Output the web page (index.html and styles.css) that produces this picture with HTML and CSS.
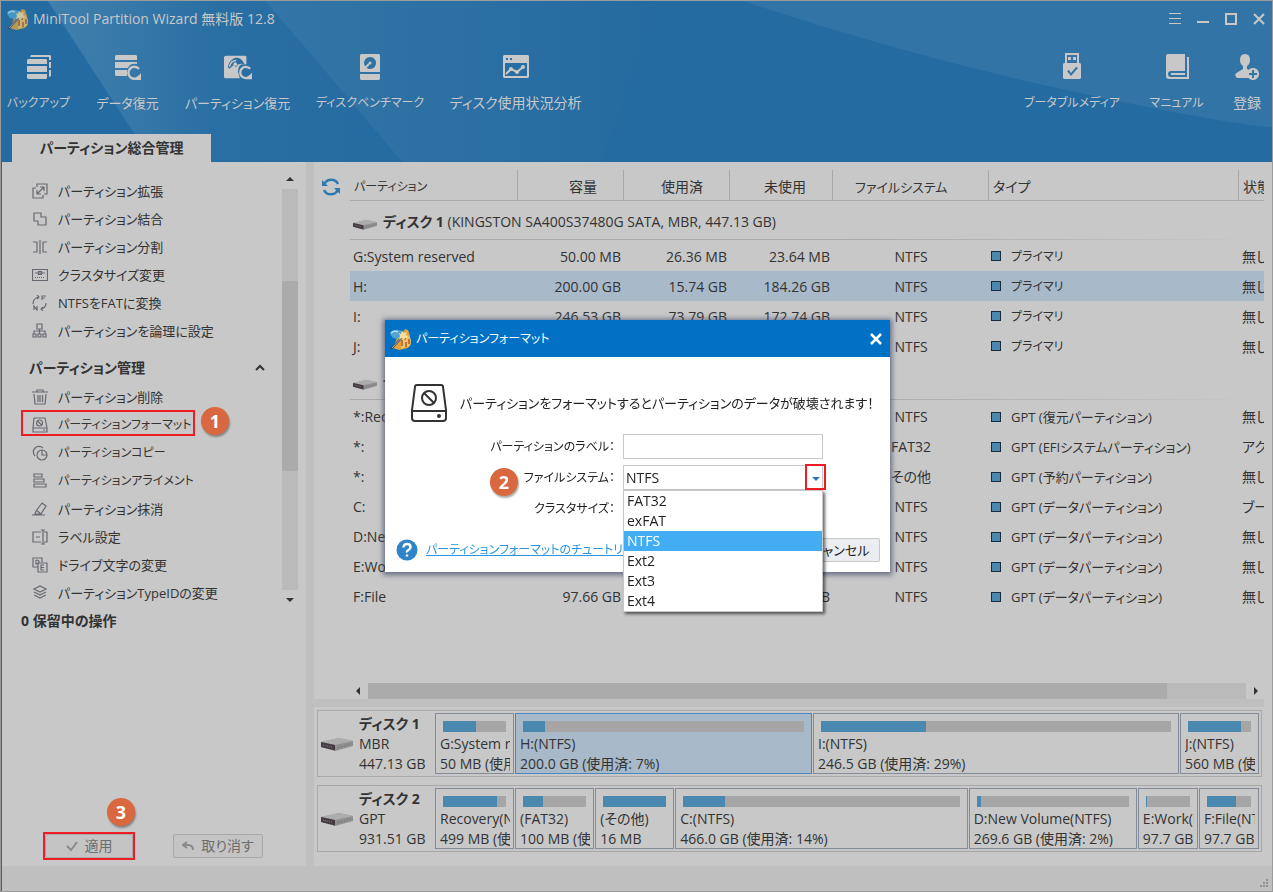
FILE: index.html
```html
<!DOCTYPE html>
<html lang="ja">
<head>
<meta charset="utf-8">
<title>MiniTool Partition Wizard</title>
<link rel="stylesheet" href="styles.css">
</head>
<body>
<svg class="defs" aria-hidden="true">
  <symbol id="app" viewBox="0 0 24 24">
    <path d="M8 11 14 5l2-3 3 1 2 6 1 8-3 4-9 2-6-2z" fill="#e0a23c"/>
    <path d="M12 12 19 8l3 5-1 6-9 3z" fill="#f0c465"/>
    <path d="M1 7Q3 2 9 3l5 1-1 5-5 3-4-1z" fill="#4fa3d1"/>
    <path d="M2 6Q5 3 9 5" fill="none" stroke="#b9dcee" stroke-width="1.5"/>
    <path d="M16 8v5m-3 0v6m4-4v5m3-8v5" stroke="#a8482a" stroke-width="1.3"/>
    <path d="M2 22 15 8" stroke="#3e4656" stroke-width="2"/><path d="M3 21 14 9" stroke="#d5d9df" stroke-width=".7"/>
    <path d="m13 4 2 2 3-1-1 3 2 2-3 1-1 2-2-2-3 1 1-3-1-3 2 1z" fill="#f8dda0"/>
  </symbol>
  <symbol id="disk" viewBox="0 0 32 14">
    <path d="M0 5 18 1l14 3v5L14 14 0 10z" fill="#8f8f8f"/>
    <path d="M0 5 18 1l14 3-18 4z" fill="#adadad"/>
    <path d="M0 5l14 3v5.500L0 10z" fill="#443b42"/>
    <path d="m2 8 9 2" stroke="#7d6673" stroke-width="1.500" stroke-dasharray="1 1"/>
    <path d="m17 10.500 14-4" stroke="#6a6a6a" stroke-dasharray="1 2"/>
  </symbol>
</svg>

<div class="window">
  <header class="top">
    <svg class="rays" viewBox="0 0 1273 162" preserveAspectRatio="none" aria-hidden="true">
      <defs>
        <linearGradient id="g1" x1="0" x2="1"><stop offset="0" stop-color="#4180ad"/><stop offset=".45" stop-color="#2a6fa3"/><stop offset="1" stop-color="#246ba1"/></linearGradient>
        <linearGradient id="g2" x1="0" x2="1"><stop offset="0" stop-color="#3375a6"/><stop offset="1" stop-color="#246ba1"/></linearGradient>
      </defs>
      <path d="M47 0H420V162H152z" fill="url(#g1)"/>
      <path d="M265 0H660L600 162H402z" fill="url(#g2)"/>
      <path d="M743 0Q900 53 1060 88T1273 127V0z" fill="#3374a6"/>
    </svg>
    <div class="titlebar">
      <svg class="logo" aria-hidden="true"><use href="#app"/></svg>
      <h1 class="title">MiniTool Partition Wizard 無料版 12.8</h1>
      <div class="controls">
        <button aria-label="メニュー"><svg viewBox="0 0 12 12"><path d="M0 .5h12M0 5.500h12M0 10.500h12" stroke-width="1"/></svg></button>
        <button aria-label="最小化"><svg viewBox="0 0 12 12"><path d="M0 9h12"/></svg></button>
        <button aria-label="最大化"><svg viewBox="0 0 12 12"><path d="M1 1h10v10H1z"/></svg></button>
        <button aria-label="閉じる"><svg viewBox="0 0 12 12"><path d="m1 1 10 10M11 1 1 11"/></svg></button>
      </div>
    </div>
    <nav class="toolbar">
      <div class="tools tools-left">
        <button class="kana"><svg viewBox="0 0 28 28"><path d="M6 2h19l1 1v4h-2V4H5zM24 9h2v6h-2zM24 17h2v6l-2 1z"/><path d="M3 6h18l1 1v4H2V7zM2 13h20v6H2zM2 21h20v4l-1 1H3l-1-1z"/></svg>バックアップ</button>
        <button><svg viewBox="0 0 28 28"><path d="M2 2h20l1 1v4H1V3zM1 9h22v2q-7-1-9 4H1zM1 17h12v6H2l-1-1z"/><path d="M25 16a6 6 0 1 0 .5 7" fill="none" stroke="#c8c8c8" stroke-width="2.500"/><path d="M27 20v7h-6z"/></svg>データ復元</button>
        <button><svg viewBox="0 0 30 28"><path fill-rule="evenodd" d="M2 2h21l1 1v8q-9-2-9 8l2 7H1l-1-1V3zM4 14 6 9q3-5 8-5t8 7q-7-2-9 3l-3-2-4 4z"/><path d="M6 14q1-7 7-7" fill="none" stroke="#c8c8c8" stroke-width="1.500"/><circle cx="12" cy="11" r="2"/><path d="M28 16a6 6 0 1 0 .5 7" fill="none" stroke="#c8c8c8" stroke-width="2.500"/><path d="M30 20v7h-6z"/></svg>パーティション復元</button>
        <button class="kana"><svg viewBox="0 0 28 28"><path fill-rule="evenodd" d="M5 1h18l1 1v17H4V2zM14 4a6 6 0 1 0 .1 0M4 21h20v5l-1 1H5l-1-1z"/><circle cx="14" cy="10" r="1.500"/><path d="m9 15 4-4" stroke="#c8c8c8" stroke-width="2"/></svg>ディスクベンチマーク</button>
        <button class="kanji"><svg viewBox="0 0 28 28"><path fill-rule="evenodd" d="M2 2h24l1 1v21l-1 1H2l-1-1V3zM4 5v2h2V5zM8 5v2h2V5zM3 10v13h22V10z"/><path d="m4 21 5-5 6 3 6-5" fill="none" stroke="#c8c8c8" stroke-width="2"/><circle cx="9" cy="16" r="2"/><circle cx="15" cy="19" r="2"/><circle cx="21" cy="14" r="2"/></svg>ディスク使用状況分析</button>
      </div>
      <div class="tools tools-right">
        <button class="kana"><svg viewBox="0 0 28 28"><path fill-rule="evenodd" d="M7 0h14v10h1l1 1v14l-1 1H6l-1-1V11l1-1h1zM9 2v8h10V2zM9 18l4 5 7-8-2-1-5 6-2-3z"/><path d="M10 4h3v3h-3zM15 4h3v3h-3z"/></svg>ブータブルメディア</button>
        <button class="kana"><svg viewBox="0 0 28 28"><path d="M5 1h17v17H8q-3 0-3 3t3 3h16V4h2v22H6q-3 0-3-3V3q0-2 2-2"/><path d="M8 20h14v2H8z"/></svg>マニュアル</button>
        <button class="kanji"><svg viewBox="0 0 28 28"><path d="M12 1q5 0 5 6 0 4-3 6v3l2 1q-3 5 1 8H4q-4-4 1-6l5-3v-3Q7 11 7 7q0-6 5-6"/><path fill-rule="evenodd" d="M20 15a6 6 0 1 0 .1 0M19 17h2v3h3v2h-3v3h-2v-3h-3v-2h3z"/></svg>登録</button>
      </div>
    </nav>
    <div class="tabs"><button class="tab">パーティション総合管理</button></div>
  </header>

  <main class="body">
    <aside class="sidebar">
      <div class="side-scroll">
        <div class="side-content">
          <ul class="menu">
            <li><a href="#"><svg viewBox="0 0 16 16"><path d="M5 4V1h10v10h-3M4 5H1v10h10v-3M5 11l7-7M8 4h4v4M5 7v4h4"/></svg>パーティション拡張</a></li>
            <li><a href="#"><svg viewBox="0 0 16 16"><path d="M2 2h7v4h5v8H6v-4H2z"/></svg>パーティション結合</a></li>
            <li><a href="#"><svg viewBox="0 0 16 16"><path d="M1 3h4v10H1M8 1v14M15 3h-4v10h4"/></svg>パーティション分割</a></li>
            <li><a href="#"><svg viewBox="0 0 16 16"><path d="M.5 2.500h15v11H.5zM3 6h10M6.500 4.500h3v3h-3z"/><path d="M3 10.500h10" stroke-dasharray="1 1"/></svg>クラスタサイズ変更</a></li>
            <li><a href="#"><svg viewBox="0 0 16 16"><path d="M1 9q0-6 6-7M5 0l2 2-2 2M14 8q0 5-5 6M11 16l-2-2 2-2M2 15v-4l3 4v-4M10 5V1h4m-4 2h3"/></svg>NTFSをFATに変換</a></li>
            <li><a href="#"><svg viewBox="0 0 16 16"><path d="M5 1h5v5H5zM7.500 6v5M2 11V8h11v3M1 11h3v3H1zM6 11h3v3H6zM11 11h3v3h-3z"/></svg>パーティションを論理に設定</a></li>
          </ul>
          <h2 class="group">パーティション管理<svg viewBox="0 0 10 8"><path d="m1 6 4-4 4 4"/></svg></h2>
          <ul class="menu">
            <li><a href="#"><svg viewBox="0 0 16 16"><path d="M0 3h16M5 3V1h6v2M2 5l1 10h10l1-10M6 6v7M8 6v7M10.500 6v7"/></svg>パーティション削除</a></li>
            <li class="marked kana"><a href="#"><svg viewBox="0 0 16 16"><path d="M2 1h11l2 10v4H1v-4zM1 11h14M11 13h2M10.500 6a3 3 0 1 1-6 0 3 3 0 0 1 6 0M5.500 4l4 4"/></svg>パーティションフォーマット</a><span class="badge badge-side">1</span></li>
            <li class="kana"><a href="#"><svg viewBox="0 0 16 16"><path d="M3 11A5 5 0 1 1 11 3M15 10A5 5 0 1 1 10 5M10 5v5h5A5 5 0 0 0 10 5"/></svg>パーティションコピー</a></li>
            <li class="kana"><a href="#"><svg viewBox="0 0 16 16"><path d="M2 1h8v3H2zM2 6h10v3H2zM2 11h12v3H2z"/></svg>パーティションアライメント</a></li>
            <li><a href="#"><svg viewBox="0 0 16 16"><path d="m4 10 6-8 4 3-5 8H3zM4 9l5 4M0 14h13"/></svg>パーティション抹消</a></li>
            <li><a href="#"><svg viewBox="0 0 16 16"><path d="M9 3H1v10h8M12 3h3v10h-3M9 1h4M11 1v14M9 15h4M4 8h4"/></svg>ラベル設定</a></li>
            <li><a href="#"><svg viewBox="0 0 16 16"><path d="M6 10H1V1h9v4M6 6h9v9H6zM4 3v4q3 0 3-2T4 3M12 8H9v5h3M9 10.500h3"/></svg>ドライブ文字の変更</a></li>
            <li><a href="#"><svg viewBox="0 0 16 16"><path d="m2 4 6-3 6 3-6 3zM2 7l6 3 6-3M2 10l6 3 6-3"/></svg>パーティションTypeIDの変更</a></li>
          </ul>
        </div>
        <div class="vbar" aria-hidden="true"><i class="arrow up"></i><div class="vtrack"><div class="vthumb"></div></div><i class="arrow down"></i></div>
      </div>
      <h2 class="pending">0 保留中の操作</h2>
      <div class="actions">
        <div class="apply"><button disabled><svg viewBox="0 0 12 12"><path d="m1 6 4 4 6-8"/></svg>適用</button><span class="badge badge-apply">3</span></div>
        <button disabled><svg viewBox="0 0 12 12"><path d="M5 2 1 5l4 3M1 5h5q5 0 5 5"/></svg>取り消す</button>
      </div>
    </aside>

    <section class="content">
      <div class="list">
        <div class="refresh"><button aria-label="更新"><svg viewBox="0 0 18 18"><path d="M2 7a7.500 7.500 0 0 1 14-1M16 11a7.500 7.500 0 0 1-14 1"/><path d="M0 2v6h6zM18 16v-6h-6z" fill="#2e7ab0" stroke="none"/></svg></button></div>
        <div class="table-wrap">
          <table>
            <colgroup><col class="c-name"><col class="c-num"><col class="c-num"><col class="c-free"><col class="c-fs"><col class="c-type"><col class="c-state"></colgroup>
            <thead><tr><th class="kana">パーティション</th><th class="num">容量</th><th class="num">使用済</th><th class="num">未使用</th><th class="fs">ファイルシステム</th><th>タイプ</th><th>状態</th></tr></thead>
            <tbody>
              <tr class="drive"><td colspan="7"><svg><use href="#disk"/></svg><b>ディスク 1</b> (KINGSTON SA400S37480G SATA, MBR, 447.13 GB)</td></tr>
              <tr><td>G:System reserved</td><td>50.00 MB</td><td>26.36 MB</td><td>23.64 MB</td><td>NTFS</td><td class="kana"><i></i>プライマリ</td><td>無し</td></tr>
              <tr class="selected"><td>H:</td><td>200.00 GB</td><td>15.74 GB</td><td>184.26 GB</td><td>NTFS</td><td class="kana"><i></i>プライマリ</td><td>無し</td></tr>
              <tr><td>I:</td><td>246.53 GB</td><td>73.79 GB</td><td>172.74 GB</td><td>NTFS</td><td class="kana"><i></i>プライマリ</td><td>無し</td></tr>
              <tr><td>J:</td><td></td><td></td><td></td><td>NTFS</td><td class="kana"><i></i>プライマリ</td><td>無し</td></tr>
              <tr class="drive"><td colspan="7"><svg><use href="#disk"/></svg><b>ディスク 2</b></td></tr>
              <tr><td>*:Recovery</td><td></td><td></td><td></td><td>NTFS</td><td><i></i>GPT (復元パーティション)</td><td>無し</td></tr>
              <tr><td>*:</td><td></td><td></td><td></td><td>FAT32</td><td><i></i>GPT (EFIシステムパーティション)</td><td>アクティブ</td></tr>
              <tr><td>*:</td><td></td><td></td><td></td><td>その他</td><td><i></i>GPT (予約パーティション)</td><td>無し</td></tr>
              <tr><td>C:</td><td></td><td></td><td></td><td>NTFS</td><td><i></i>GPT (データパーティション)</td><td>ブート</td></tr>
              <tr><td>D:New Volume</td><td></td><td></td><td></td><td>NTFS</td><td><i></i>GPT (データパーティション)</td><td>無し</td></tr>
              <tr><td>E:Work</td><td></td><td></td><td></td><td>NTFS</td><td><i></i>GPT (データパーティション)</td><td>無し</td></tr>
              <tr><td>F:File</td><td>97.66 GB</td><td></td><td>32.55 GB</td><td>NTFS</td><td><i></i>GPT (データパーティション)</td><td>無し</td></tr>
            </tbody>
          </table>
        </div>
      </div>
      <div class="hbar" aria-hidden="true"><i class="arrow left"></i><div class="htrack"><div class="hthumb"></div></div><i class="arrow right"></i></div>
      <div class="splitter"></div>
      <div class="maps">
        <div class="map">
          <div class="drive-info"><svg><use href="#disk"/></svg><p><b>ディスク 1</b><br>MBR<br>447.13 GB</p></div>
          <div class="parts">
            <div class="part" style="flex-grow:70"><div class="bar"><div style="width:52%"></div></div><p>G:System reserved</p><p>50 MB (使用済: 52%)</p></div>
            <div class="part current" style="flex-grow:288"><div class="bar"><div style="width:8%"></div></div><p>H:(NTFS)</p><p>200.0 GB (使用済: 7%)</p></div>
            <div class="part" style="flex-grow:357"><div class="bar"><div style="width:30%"></div></div><p>I:(NTFS)</p><p>246.5 GB (使用済: 29%)</p></div>
            <div class="part" style="flex-grow:70"><div class="bar"><div style="width:84%"></div></div><p>J:(NTFS)</p><p>560 MB (使用済: 84%)</p></div>
          </div>
        </div>
        <div class="map">
          <div class="drive-info"><svg><use href="#disk"/></svg><p><b>ディスク 2</b><br>GPT<br>931.51 GB</p></div>
          <div class="parts">
            <div class="part" style="flex-grow:70"><div class="bar"><div style="width:86%"></div></div><p>Recovery(NTFS)</p><p>499 MB (使用済: 86%)</p></div>
            <div class="part" style="flex-grow:70"><div class="bar"><div style="width:32%"></div></div><p>(FAT32)</p><p>100 MB (使用済: 32%)</p></div>
            <div class="part" style="flex-grow:70"><div class="bar"><div style="width:100%"></div></div><p>(その他)</p><p>16 MB</p></div>
            <div class="part" style="flex-grow:283"><div class="bar"><div style="width:15%"></div></div><p>C:(NTFS)</p><p>466.0 GB (使用済: 14%)</p></div>
            <div class="part" style="flex-grow:159"><div class="bar"><div style="width:3%"></div></div><p>D:New Volume(NTFS)</p><p>269.6 GB (使用済: 2%)</p></div>
            <div class="part" style="flex-grow:51"><div class="bar"><div style="width:2%"></div></div><p>E:Work(NTFS)</p><p>97.7 GB</p></div>
            <div class="part" style="flex-grow:51"><div class="bar"><div style="width:66%"></div></div><p>F:File(NTFS)</p><p>97.7 GB</p></div>
          </div>
        </div>
      </div>
    </section>
  </main>
  <footer class="status"><svg viewBox="0 0 9 9" aria-hidden="true"><path d="M6 0h2v2H6zM3 3h2v2H3zM6 3h2v2H6zM0 6h2v2H0zM3 6h2v2H3zM6 6h2v2H6z"/></svg></footer>
</div>

<div class="overlay">
  <div class="dialog" role="dialog" aria-labelledby="dlg-title">
    <div class="dialog-title"><svg class="logo" aria-hidden="true"><use href="#app"/></svg><h2 id="dlg-title">パーティションフォーマット</h2>
      <button aria-label="閉じる"><svg viewBox="0 0 12 12"><path d="m1 1 10 10M11 1 1 11"/></svg></button></div>
    <div class="warning">
      <svg viewBox="0 0 36 38" aria-hidden="true"><path d="M6 1h24q2 0 2 2l3 23v8q0 3-3 3H4q-3 0-3-3v-8L4 3q0-2 2-2M1 27h34"/><circle cx="18" cy="14" r="7"/><path d="m13 9 10 10"/><circle cx="28" cy="32" r="1" fill="#333"/></svg>
      <p>パーティションをフォーマットするとパーティションのデータが破壊されます！</p>
    </div>
    <div class="form">
      <label for="f-label">パーティションのラベル：</label>
      <input id="f-label" type="text">
      <label for="f-fs">ファイルシステム：<span class="badge badge-form">2</span></label>
      <div class="combo">
        <select id="f-fs"><option>NTFS</option></select>
        <span class="combo-arrow"><i></i></span>
        <ul class="options" role="listbox"><li role="option">FAT32</li><li role="option">exFAT</li><li role="option" class="active" aria-selected="true">NTFS</li><li role="option">Ext2</li><li role="option">Ext3</li><li role="option">Ext4</li></ul>
      </div>
      <label for="f-cluster">クラスタサイズ：</label>
      <select id="f-cluster"><option></option></select>
    </div>
    <div class="dialog-foot">
      <svg viewBox="0 0 22 22" aria-hidden="true"><circle cx="11" cy="11" r="10.500" fill="#2f83c9"/><path d="M7.500 8.500q0-3.500 3.500-3.500t3.500 3q0 2-2 3t-1.500 2.500M11 15.500v2" fill="none" stroke="#fff" stroke-width="2.400"/></svg>
      <a class="kana" href="#">パーティションフォーマットのチュートリアル</a>
      <button>キャンセル</button>
    </div>
  </div>
</div>
</body>
</html>
```
FILE: styles.css
```css
*, *::before { box-sizing: border-box; }
html, body { height: 100%; margin: 0; }
body {
  font: 14px/20px "Open Sans", "Noto Sans CJK JP", sans-serif;
  font-feature-settings: "palt";
  color: #333;
  background: #c8c8c8;
}
h1, h2, p, ul { margin: 0; padding: 0; font-weight: normal; }
ul { list-style: none; }
button, input, select { font: inherit; font-feature-settings: inherit; color: inherit; }
button { border: 0; padding: 0; background: none; }
a { color: inherit; text-decoration: none; }
.defs { position: absolute; width: 0; height: 0; }

.window {
  min-height: 100vh;
  display: flex;
  flex-direction: column;
  border: 1px solid #9b9b9b;
}

/* header */
.top {
  position: relative;
  height: 161px;
  display: flex;
  flex-direction: column;
  justify-content: space-between;
  background: #246ba1;
  color: #c8c8c8;
}
.rays { position: absolute; inset: 0; width: 100%; height: 100%; }
.titlebar, .toolbar, .tabs { position: relative; }
.titlebar { display: flex; align-items: center; height: 36px; padding: 0 7px 0 5px; gap: 3px; }
.titlebar .logo { opacity: .8; }
.logo { width: 24px; height: 24px; flex: none; }
.title { font-size: 14px; }
.controls { display: flex; gap: 16px; margin-left: auto; }
.controls svg { display: block; width: 12px; height: 12px; fill: none; stroke: #c8c8c8; stroke-width: 2; }
.toolbar { display: flex; justify-content: space-between; flex: 1; padding: 16px 10px 0 6px; }
.tools { display: grid; gap: 25px; align-items: start; font-size: 13px; }
.tools-left { grid-template-columns: 63px 65px 105px 110px 131px; }
.tools-right { grid-template-columns: 98px 55px 30px; gap: 28px; }
.tools button { display: flex; flex-direction: column; align-items: center; gap: 12px; white-space: nowrap; }
.tools svg { width: 28px; height: 28px; fill: #c8c8c8; }
.tools .kanji { font-size: 14px; }
.kana.kana { font-size: 12px; }
.tabs { display: flex; padding-left: 11px; }
.tab { width: 199px; height: 28px; background: #c8c8c8; color: #333; font-weight: bold; }

/* sidebar */
.body { flex: 1; display: flex; min-height: 0; }
.sidebar {
  width: 305px;
  flex: none;
  display: flex;
  flex-direction: column;
  border-left: 1px solid #1f6aa5;
  padding: 15px 8px 6px 1px;
}
.side-scroll { display: flex; justify-content: space-between; }
.side-content { width: 270px; }
.menu { font-size: 13px; line-height: 28px; }
.menu li { position: relative; }
.menu a { display: flex; align-items: center; gap: 10px; padding-left: 29px; white-space: nowrap; }
.menu svg { width: 16px; height: 16px; fill: none; stroke: #6b6872; stroke-width: 1.2; }
.marked::before {
  content: "";
  position: absolute;
  left: 18px;
  top: -1px;
  width: 174px;
  height: 26px;
  border: 2px solid #ee1c24;
}
.badge {
  position: absolute;
  width: 28px;
  height: 28px;
  border-radius: 50%;
  background: #d9673f;
  color: #fff;
  font: bold 18px/28px "Open Sans", sans-serif;
  text-align: center;
  box-shadow: 1px 2px 2px #0005;
}
.badge-side { left: 198px; top: -4px; }
.group {
  display: flex;
  justify-content: space-between;
  align-items: center;
  height: 38px;
  padding: 8px 8px 0 26px;
  font-size: 14px;
  font-weight: bold;
}
.group svg { width: 10px; height: 8px; fill: none; stroke: #333; stroke-width: 2; }
.vbar { display: flex; flex-direction: column; align-items: center; justify-content: space-between; width: 16px; padding-bottom: 5px; }
.vtrack { flex: 1; align-self: stretch; margin: 8px 0; background: #bababa; padding-top: 92px; }
.vthumb { height: 190px; background: #ababab; }
.arrow { border: 4px solid transparent; width: 0; height: 0; }
.up { border-top: 0; border-bottom-color: #333; }
.down { border-bottom: 0; border-top-color: #333; }
.left { border-left: 0; border-right-color: #333; }
.right { border-right: 0; border-left-color: #333; }
.pending { padding: 4px 18px; font-size: 14px; font-weight: bold; }
.actions { display: flex; gap: 38px; margin-top: auto; padding-left: 40px; align-items: center; }
.actions button {
  display: flex;
  align-items: center;
  justify-content: center;
  gap: 7px;
  width: 90px;
  height: 24px;
  border: 1px solid #a8a8a8;
  border-radius: 2px;
  background: #c4c4c4;
  color: #6e6e6e;
}
.actions svg { width: 12px; height: 12px; fill: none; stroke: #8a8a8a; stroke-width: 2; }
.apply { position: relative; border: 2px solid #ee1c24; }
.apply button { width: 88px; }
.badge-apply { left: 62px; top: -36px; }

/* partition list */
.content {
  flex: 1;
  min-width: 0;
  display: flex;
  flex-direction: column;
  border-left: 8px solid #bfbfbf;
  padding-right: 8px;
}
.list { flex: 1; display: flex; }
.refresh { width: 36px; flex: none; padding: 16px 0 0 8px; }
.refresh svg { display: block; width: 18px; height: 18px; fill: none; stroke: #2e7ab0; stroke-width: 2.5; }
.table-wrap { flex: 1; min-width: 0; width: 0; overflow: hidden; padding-top: 8px; }
table { table-layout: fixed; width: 988px; border-collapse: separate; border-spacing: 0; white-space: nowrap; }
.c-name { width: 168px; }
.c-num { width: 106px; }
.c-free { width: 103px; }
.c-fs { width: 156px; }
.c-type { width: 250px; }
.c-state { width: 99px; }
th { height: 31px; padding: 3px 4px 0; border-right: 1px solid #a8a8a8; border-bottom: 1px solid #a8a8a8; font-weight: normal; text-align: left; }
th.num { padding-right: 26px; text-align: right; }
th.fs { padding-left: 22px; font-size: 13px; }
td { height: 30px; padding: 2px 3px 0; }
td:nth-child(n+2):nth-child(-n+4) { text-align: right; }
td:nth-child(5) { text-align: center; }
td:nth-child(6) { padding-left: 2px; font-size: 13px; }
td i { display: inline-block; width: 10px; height: 10px; margin-right: 10px; border: 1px solid #1b2b3b; background: #4b88b0; }
.selected { background: #a8b9ca; }
.drive td { height: 40px; }
.drive td { background: linear-gradient(90deg, #a8a8a8 50%, #c8c8c8 92%) 0 38px / 100% 1px no-repeat; }
.drive td svg { width: 24px; height: 11px; margin-right: 6px; vertical-align: -3px; }
.hbar { display: flex; align-items: center; justify-content: space-between; height: 16px; padding: 0 6px 0 42px; }
.htrack { flex: 1; align-self: stretch; margin: 0 8px 0 8px; background: #bababa; }
.hthumb { width: 91%; height: 16px; background: #ababab; }
.splitter { height: 8px; background: #bfbfbf; }

/* disk map */
.maps { display: flex; flex-direction: column; gap: 8px; padding: 3px 2px 14px 3px; }
.map { display: flex; border: 1px solid #a8a8a8; padding: 2px; }
.drive-info { width: 115px; flex: none; display: flex; align-items: center; gap: 6px; white-space: nowrap; }
.drive-info svg { width: 32px; height: 14px; margin-left: 1px; flex: none; }
.parts { flex: 1; min-width: 0; display: flex; gap: 1px; }
.part { flex: 1 1 0; min-width: 0; border: 1px solid #858c99; padding: 7px 3px 0 4px; height: 61px; }
.part p { overflow: hidden; white-space: nowrap; }
.current { border-color: #4b88c0; background: #a8b9ca; }
.bar { height: 11px; margin: 0 4px 2px 3px; background: #a6a6a6; }
.bar div { height: 100%; background: #4b88b0; }

.status { height: 25px; display: flex; justify-content: flex-end; align-items: flex-end; padding: 3px; border-left: 1px solid #1f6aa5; background: #bfbfbf; }
.status svg { width: 9px; height: 9px; fill: #929292; }

/* format dialog */
.overlay { position: fixed; inset: 0; display: flex; align-items: center; justify-content: center; padding-left: 2px; }
.dialog { width: 505px; background: #fff; color: #222; box-shadow: 0 1px 5px 2px #3f4668b0; }
.dialog-title { display: flex; align-items: center; gap: 3px; height: 37px; padding: 0 8px 0 4px; background: #0071c5; color: #fff; }
.dialog-title h2 { font-size: 12px; }
.dialog-title button { margin-left: auto; }
.dialog-title button svg { display: block; width: 12px; height: 12px; stroke: #fff; stroke-width: 2.5; }
.warning { display: flex; align-items: center; gap: 13px; padding: 27px 0 12px 26px; font-size: 13px; white-space: nowrap; }
.warning svg { width: 36px; height: 38px; fill: none; stroke: #333; stroke-width: 2; }
.form {
  display: grid;
  grid-template-columns: 230px 200px;
  column-gap: 8px;
  row-gap: 6px;
  align-items: center;
  line-height: 24px;
}
.form label { position: relative; text-align: right; font-size: 12px; }
.form input, .form select { display: block; width: 100%; height: 25px; margin: 0; padding: 0 2px; border: 1px solid #c8c8c8; border-radius: 0; background: #fff; appearance: none; }
.badge-form { left: 105px; top: 2px; }
.combo { position: relative; }
.combo-arrow { position: absolute; right: -3px; top: -1px; width: 21px; height: 26px; border: 2px solid #ee1c24; display: flex; align-items: center; justify-content: center; pointer-events: none; }
.combo-arrow i { border: 4px solid transparent; border-bottom: 0; border-top-color: #2a78b8; margin-top: 4px; }
.options { position: absolute; z-index: 2; left: 0; top: 25px; width: 100%; border: 1px solid #c8c8c8; background: #fff; line-height: 20px; box-shadow: 2px 2px 3px #0009; }
.options li { padding: 0 3px; }
.options .active { background: #42adf2; color: #fff; }
.dialog-foot { display: flex; align-items: center; gap: 8px; padding: 17px 10px 10px 11px; font-size: 13px; white-space: nowrap; }
.dialog-foot svg { width: 22px; height: 22px; flex: none; }
.dialog-foot a { color: #2a94e0; text-decoration: underline; width: 240px; overflow: hidden; }
.dialog-foot button { margin-left: auto; width: 80px; height: 24px; border: 1px solid #c8c8c8; border-radius: 2px; background: #ebedf0; }
```
